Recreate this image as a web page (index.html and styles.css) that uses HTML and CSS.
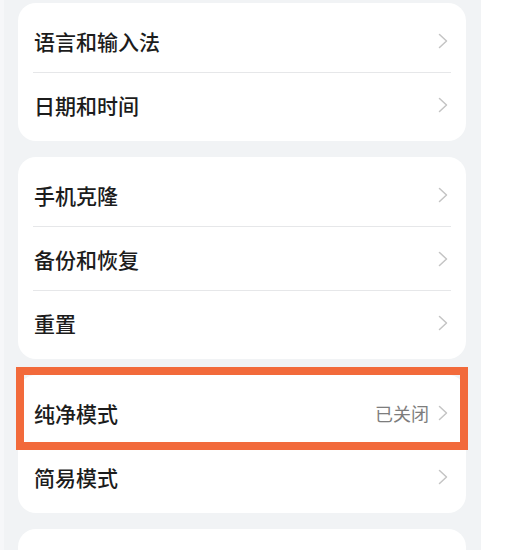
FILE: index.html
```html
<!DOCTYPE html>
<html lang="zh">
<head>
<meta charset="utf-8">
<link rel="stylesheet" href="styles.css">
</head>
<body>
<div class="screen">
  <div class="card">
    <div class="row"><span class="label">语言和输入法</span><svg class="chev" viewBox="0 0 10 16"><polyline points="1.5,1.5 8.5,8 1.5,14.5"/></svg></div>
    <div class="row last"><span class="label">日期和时间</span><svg class="chev" viewBox="0 0 10 16"><polyline points="1.5,1.5 8.5,8 1.5,14.5"/></svg></div>
  </div>
  <div class="card">
    <div class="row"><span class="label">手机克隆</span><svg class="chev" viewBox="0 0 10 16"><polyline points="1.5,1.5 8.5,8 1.5,14.5"/></svg></div>
    <div class="row"><span class="label">备份和恢复</span><svg class="chev" viewBox="0 0 10 16"><polyline points="1.5,1.5 8.5,8 1.5,14.5"/></svg></div>
    <div class="row last"><span class="label">重置</span><svg class="chev" viewBox="0 0 10 16"><polyline points="1.5,1.5 8.5,8 1.5,14.5"/></svg></div>
  </div>
  <div class="card">
    <div class="row highlighted"><span class="label">纯净模式</span><span class="value">已关闭</span><svg class="chev" viewBox="0 0 10 16"><polyline points="1.5,1.5 8.5,8 1.5,14.5"/></svg><span class="frame"></span></div>
    <div class="row last"><span class="label">简易模式</span><svg class="chev" viewBox="0 0 10 16"><polyline points="1.5,1.5 8.5,8 1.5,14.5"/></svg></div>
  </div>
  <div class="card tail"></div>
</div>
</body>
</html>
```

FILE: styles.css
```css
html, body {
  margin: 0;
  padding: 0;
  background: #ffffff;
}
body {
  width: 510px;
  height: 550px;
  overflow: hidden;
  font-family: "Noto Sans CJK SC", "Noto Sans", sans-serif;
}
.screen {
  width: 481px;
  height: 550px;
  overflow: hidden;
  box-sizing: border-box;
  background: #f1f3f5;
  border-left: 4px solid #f6f7f9;
  padding: 3px 15px 0 14px;
  display: flex;
  flex-direction: column;
  gap: 16px;
}
.card {
  background: #ffffff;
  border-radius: 18px;
  padding: 6px 15px 4px;
  flex-shrink: 0;
}
.card.tail {
  height: 60px;
}
.row {
  position: relative;
  height: 63px;
  display: flex;
  align-items: center;
  border-bottom: 1px solid #e6e7e9;
}
.row.last {
  border-bottom: none;
  height: 64px;
}
.label {
  flex: 1;
  font-size: 21px;
  font-weight: 500;
  color: #1c1c1c;
  padding-left: 1px;
}
.value {
  font-size: 18px;
  color: #7d7d7d;
  margin-right: 9px;
}
.chev {
  width: 10px;
  height: 16px;
  margin-right: 3px;
  fill: none;
  stroke: #c4c4c4;
  stroke-width: 1.5;
  stroke-linecap: round;
  stroke-linejoin: round;
}
.frame {
  position: absolute;
  left: -17px;
  right: -17px;
  top: -14px;
  bottom: -6px;
  border: 8px solid #f26a3b;
  pointer-events: none;
}
```
